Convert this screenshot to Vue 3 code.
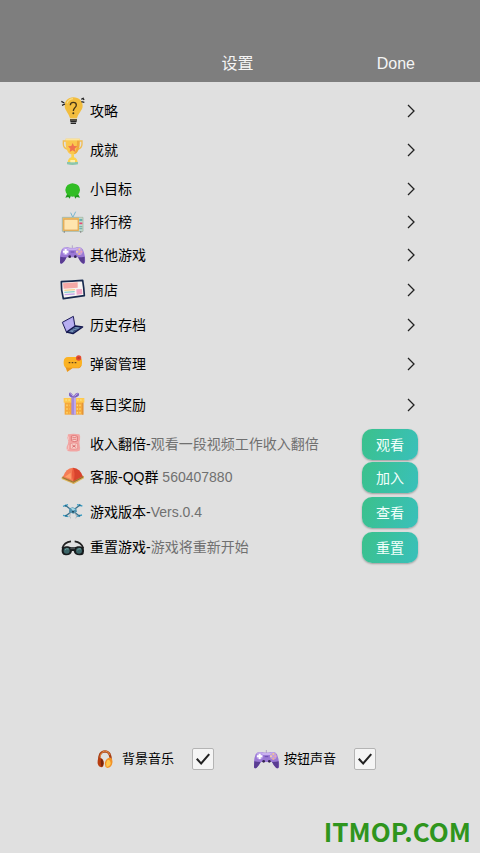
<script setup>
import { reactive } from 'vue'

const gamepad = `
  <path d="M67 232v-12" stroke="#9a86b8" stroke-width="2"/>
  <path d="M35 233q5-9 18-7q4 2 14 2t14-2q13-2 18 7q8 20 6 38q-2 7-9 2q-7-6-12-17H50q-5 11-12 17q-7 5-8-2q-2-20 5-38z" fill="#9a78d4"/>
  <path d="M31 254q8 2 19 2q-5 11-12 17q-7 5-8-2zM104 254q-8 2-20 2q5 11 12 17q7 5 8-2z" fill="#5a3d92"/>
  <path d="M37 232q5-7 15-5q4 2 15 2t15-2q10-2 15 5q-12-2-18 3H55q-6-5-18-3z" fill="#c9b0f0"/>
  <circle cx="47" cy="239" r="10" fill="#b79be8"/>
  <circle cx="88" cy="239" r="10" fill="#bf9fdc"/>
  <path d="M47 231v16M39 239h16" stroke="#fff" stroke-width="6"/>
  <circle cx="88" cy="232" r="3" fill="#f5c690"/><circle cx="94" cy="239" r="3" fill="#f0a0b8"/>
  <circle cx="81" cy="239" r="3" fill="#f7d3a0"/><circle cx="88" cy="246" r="3" fill="#f2b089"/>
  <circle cx="59" cy="254" r="4" fill="#33234f"/><circle cx="76" cy="254" r="4" fill="#33234f"/>
  <path d="M62 240h11" stroke="#6d4bb0" stroke-width="3"/>`

const art = {
  bulb: {
    box: '30 33 78 90',
    body: `
      <path d="M70 37c-16 0-26 11-26 25c0 14 12 21 16 38h21c4-17 17-24 17-38c0-14-11-25-28-25z" fill="#f2bd3e"/>
      <path d="M51 55q4-12 18-14" stroke="#fadd83" stroke-width="4" fill="none"/>
      <path d="M61 61q0-9 9-9t9 8q0 5-5 9q-4 4-4 9" stroke="#453516" stroke-width="4" fill="none"/>
      <circle cx="70" cy="85" r="3" fill="#453516"/>
      <path d="M60 101h21v5H60z" fill="#f3d078"/>
      <path d="M60 105h21M61 110h19M62 115h16" stroke="#252525" stroke-width="4"/>
      <path d="M34 49l9 5M36 61l9-4M94 43l7-4M94 50l9 2M99 39l3 6" stroke="#222" stroke-width="4"/>`
  },
  trophy: {
    box: '30 150 78 90',
    body: `
      <path d="M49 168H40v9q0 13 14 16M86 168h10v9q0 13-14 16" stroke="#f0bc52" stroke-width="4" fill="none"/>
      <path d="M47 161h42q2 46-21 48q-23-2-21-48z" fill="#fac74e"/>
      <path d="M47 161h42v5H47z" fill="#fce49c"/>
      <path d="M81 167q1 28-10 41q19-4 18-41z" fill="#efa83c"/>
      <path d="M68 174l4 9 10 1-8 7 2 10-8-5-9 5 2-10-7-7 10-1z" fill="#f0724f"/>
      <path d="M64 208h8v9q9 2 11 14H53q2-12 11-14z" fill="#fbd34e"/>
      <path d="M51 231h33v7q-17 4-33 0z" fill="#8cc6ad"/>
      <path d="M61 225h14v7H61z" fill="#fff0aa"/>`
  },
  badge: {
    box: '30 3 78 90',
    body: `
      <path d="M54 57l-8 17 9-2 4 5 6-14zM81 57l9 17-10-2-4 5-6-14z" fill="#209a1c"/>
      <path d="M61 32q6-3 13 0q11 2 14 11q4 8 0 16q-4 9-13 10q-7 4-14 0q-10-2-13-10q-4-8 0-16q3-9 13-11z" fill="#31bd24"/>`
  },
  tv: {
    box: '30 105 78 90',
    body: `
      <path d="M68 135l-6-13M69 135l8-16" stroke="#77b6cf" stroke-width="3"/>
      <path d="M37 136h62v42H37z" fill="#f2b95a" stroke="#8ab5b7" stroke-width="2"/>
      <path d="M42 142h42v32H42z" fill="#ffe5ae" stroke="#d69b4e" stroke-width="2"/>
      <path d="M87 137h11v40H87z" fill="#bbd8d0"/>
      <path d="M88 144h9" stroke="#459a9d" stroke-width="4"/>
      <path d="M88 154h9" stroke="#e84775" stroke-width="5"/>
      <path d="M88 164h9M88 170h9" stroke="#49928d" stroke-width="2"/>
      <path d="M41 180h4M90 180h4" stroke="#666" stroke-width="3"/>`
  },
  gamepad: { box: '30 204 78 90', body: gamepad },
  card: {
    box: '30 15 78 90',
    body: `
      <path d="M34 35q32-1 64-4q4 23 5 46q-32 4-63 9q-7-25-6-51z" fill="#f8f3f2" stroke="#17294e" stroke-width="5" stroke-linejoin="round"/>
      <path d="M39 40l44-3v16l-42 3z" fill="#f5a8a6"/>
      <path d="M43 61l32-2" stroke="#f6d48d" stroke-width="4"/>
      <path d="M43 67l31-2" stroke="#85cfcb" stroke-width="4"/>
      <path d="M44 74l30-2" stroke="#c6a7e9" stroke-width="4"/>
      <path d="M79 58l17-1 1 15-17 2z" fill="#f2a8c6"/>`
  },
  laptop: {
    box: '30 120 78 90',
    body: `
      <path d="M37 157l33-18 5 30-25 19z" fill="#aaa1e8" stroke="#20205a" stroke-width="3" stroke-linejoin="round"/>
      <path d="M41 159l26-14 4 22-20 14z" fill="#b8aff1"/>
      <path d="M50 186l26-18 22 3-29 20z" fill="#526b98" stroke="#14184f" stroke-width="4" stroke-linejoin="round"/>
      <path d="M60 184l17-12 11 1-19 13z" fill="#7e9cc0"/>
      <path d="M64 179l15 3M71 175l13 3M68 187l7-6" stroke="#25396a" stroke-width="2"/>`
  },
  bubble: {
    box: '30 12 78 90',
    body: `
      <path d="M54 36h30q12 0 12 14v5q0 14-14 14H67l-15 11q-3-1-1-11q-10-2-10-14v-5q1-14 13-14z" fill="#fbb223"/>
      <path d="M46 65q5 4 13 3h24q8-1 12-9q-2 11-14 11H67l-15 10z" fill="#eb951c"/>
      <path d="M56 53h5M65 53h5M74 53h5" stroke="#61421c" stroke-width="4"/>
      <circle cx="86" cy="39" r="8" fill="#e34b31"/>
      <path d="M84 37l4 4M88 37l-4 4" stroke="#8c281e" stroke-width="2"/>`
  },
  gift: {
    box: '30 138 78 90',
    body: `
      <path d="M44 174h56v38H44z" fill="#f6a83b"/>
      <path d="M41 162h62v14H41z" fill="#ffc94f"/>
      <path d="M49 184h9M80 184h14M49 195h9M80 195h14M49 206h9M80 206h14" stroke="#ffdf70" stroke-width="5" stroke-dasharray="4 4"/>
      <path d="M46 168h14M81 168h19" stroke="#fbe98e" stroke-width="3" stroke-dasharray="5 4"/>
      <path d="M64 161h14v51H64z" fill="#a78bd7"/>
      <path d="M72 161h6v51h-6z" fill="#c0a9e9"/>
      <path d="M97 176h3v36h-3z" fill="#d98d3a"/>
      <path d="M71 161q-16-1-14-12q3-10 14 7q10-15 16-7q3 9-16 12z" fill="#7d62bd"/>
      <path d="M61 149q4 0 8 8M83 149q-5 1-9 8" stroke="#c5b3ef" stroke-width="3" fill="none"/>`
  },
  ticket: {
    box: '30 15 78 90',
    body: `
      <path d="M54 31q16-4 34 0q4 4 2 16q-3 5-1 15q3 12 0 18q-15 5-36 1q-5-4-3-13q5-10 5-16q-5-12-1-21z" fill="#f2a5a3"/>
      <path d="M64 36q11-3 18 1v14q-9 4-18-1z" fill="#f9d2ce" stroke="#de7777" stroke-width="3"/>
      <path d="M67 41h12M67 46h12" stroke="#e57e7d" stroke-width="3"/>
      <path d="M61 59q11-5 22 0v15q-11 4-22 0z" fill="#f7cbc5" stroke="#e78583" stroke-width="2"/>
      <path d="M67 63l10 7M77 63l-10 7" stroke="#da6d70" stroke-width="3"/>
      <path d="M51 34q8 5 3 14M52 79q6-6 4-15" stroke="#fbd8d4" stroke-width="2" fill="none"/>`
  },
  tent: {
    box: '30 114 78 90',
    body: `
      <path d="M35 160l34-24 33 22-31 21z" fill="#b78436"/>
      <path d="M35 160l36 14 31-16v5l-31 17-36-15z" fill="#dfb75b"/>
      <path d="M69 131q-22 1-30 28l31 13z" fill="#f57c57"/>
      <path d="M69 131q22 2 29 26l-28 15z" fill="#d8432e"/>
      <path d="M69 131q-7 18 1 41q8-22-1-41z" fill="#eb5b3d"/>
      <path d="M45 158l17-12 1 19z" fill="#ffa16b"/>
      <path d="M37 161l33 14 30-16" stroke="#76542b" stroke-width="2" fill="none"/>`
  },
  drone: {
    box: '30 18 78 90',
    body: `
      <path d="M46 43l42 32M89 43L48 74" stroke="#3c718a" stroke-width="4"/>
      <path d="M39 46l15-5M81 41l16 4M39 73l16 4M80 76l16-4" stroke="#3f9fc5" stroke-width="4"/>
      <path d="M58 52l10-3 11 4 2 9-11 6-13-5z" fill="#5193b0"/>
      <path d="M62 52l7-1 8 4-8 4z" fill="#a7d8e6"/>
      <circle cx="69" cy="62" r="3" fill="#22465a"/>
      <path d="M61 65l-2 13 4 4M75 65l5 12-3 5" stroke="#999fa6" stroke-width="2" fill="none"/>
      <circle cx="47" cy="44" r="3" fill="#266c8d"/><circle cx="89" cy="43" r="3" fill="#266c8d"/>
      <circle cx="48" cy="74" r="3" fill="#266c8d"/><circle cx="88" cy="74" r="3" fill="#266c8d"/>`
  },
  goggles: {
    box: '30 123 78 90',
    body: `
      <path d="M37 172q5-19 26-21M74 151q20 2 26 21" stroke="#222" stroke-width="5" fill="none"/>
      <path d="M36 170q6-6 18-4l9 3h11l9-3q14-2 18 4q5 23-11 23q-16 1-19-13h-5q-3 14-19 13q-16-1-11-23z" fill="#171b1d"/>
      <circle cx="50" cy="179" r="9" fill="#3b6467"/><circle cx="87" cy="179" r="9" fill="#3b6467"/>
      <path d="M45 177q4-6 11-3M82 177q4-6 11-3" stroke="#75a4a2" stroke-width="3" fill="none"/>
      <path d="M61 173h14" stroke="#747a7c" stroke-width="2"/>`
  },
  headphones: {
    box: '20 10 78 90',
    body: `
      <path d="M42 62q-3-29 17-30q19 1 17 31" stroke="#a64016" stroke-width="7" fill="none"/>
      <path d="M44 50q2-17 15-19q10 0 15 12" stroke="#e68b45" stroke-width="3" fill="none"/>
      <path d="M39 53q12-5 16 10q2 13-5 17q-11 0-13-12q-1-9 2-15z" fill="#b83d0f"/>
      <path d="M47 54q8 3 7 16q-1 8-5 9q-4-9-2-25z" fill="#7a260c"/>
      <path d="M77 51q-15-1-18 14q-2 14 7 17q13-2 15-15q2-10-4-16z" fill="#f29227"/>
      <path d="M67 57q-7 8-3 22q11-1 12-11q0-10-9-11z" fill="#ffc84e"/>`
  },
  gamepadSmall: { box: '30 202 78 90', body: gamepad }
}

const links = [
  { name: '攻略', icon: 'bulb', gap: 'none' },
  { name: '成就', icon: 'trophy', gap: 'medium' },
  { name: '小目标', icon: 'badge', gap: 'medium' },
  { name: '排行榜', icon: 'tv', gap: 'tight' },
  { name: '其他游戏', icon: 'gamepad', gap: 'tight' },
  { name: '商店', icon: 'card', gap: 'small' },
  { name: '历史存档', icon: 'laptop', gap: 'small' },
  { name: '弹窗管理', icon: 'bubble', gap: 'medium' },
  { name: '每日奖励', icon: 'gift', gap: 'large' }
]

const actions = [
  { name: '收入翻倍-', note: '观看一段视频工作收入翻倍', button: '观看', icon: 'ticket', gap: 'medium' },
  { name: '客服-QQ群 ', note: '560407880', button: '加入', icon: 'tent', gap: 'tight' },
  { name: '游戏版本-', note: 'Vers.0.4', button: '查看', icon: 'drone', gap: 'small' },
  { name: '重置游戏-', note: '游戏将重新开始', button: '重置', icon: 'goggles', gap: 'small' }
]

const sound = reactive({
  music: true,
  buttons: true
})
</script>

<template>
  <div class="page">
    <header class="header">
      <h1>设置</h1>
      <button type="button" class="done">Done</button>
    </header>

    <main class="list">
      <button v-for="item in links" :key="item.name" type="button" class="row link" :class="item.gap">
        <svg class="icon" :viewBox="art[item.icon].box" fill="none" aria-hidden="true" v-html="art[item.icon].body"></svg>
        <span class="name">{{ item.name }}</span>
        <svg class="chevron" viewBox="0 0 8 14" aria-hidden="true">
          <path d="M1 1l6 6-6 6" fill="none" stroke="#222" stroke-width="1.300" />
        </svg>
      </button>

      <div v-for="item in actions" :key="item.name" class="row" :class="item.gap">
        <svg class="icon" :viewBox="art[item.icon].box" fill="none" aria-hidden="true" v-html="art[item.icon].body"></svg>
        <span class="name">{{ item.name }}<span class="note">{{ item.note }}</span></span>
        <button type="button" class="action">{{ item.button }}</button>
      </div>
    </main>

    <div class="sounds">
      <div class="sound">
        <svg class="icon" :viewBox="art.headphones.box" fill="none" aria-hidden="true" v-html="art.headphones.body"></svg>
        <label for="music">背景音乐</label>
        <input id="music" v-model="sound.music" type="checkbox">
      </div>
      <div class="sound">
        <svg class="icon" :viewBox="art.gamepadSmall.box" fill="none" aria-hidden="true" v-html="art.gamepadSmall.body"></svg>
        <label for="buttons">按钮声音</label>
        <input id="buttons" v-model="sound.buttons" type="checkbox">
      </div>
    </div>

    <footer class="site">ITMOP.COM</footer>
  </div>
</template>

<style>
body {
  margin: 0;
  background: #e0e0e0;
}
</style>

<style scoped>
.page {
  display: flex;
  flex-direction: column;
  min-height: 100vh;
  background: #e0e0e0;
  color: #000;
  font-family: "Liberation Sans", "Noto Sans CJK SC", sans-serif;
  font-size: 14px;
}

button {
  margin: 0;
  padding: 0;
  border: 0;
  background: none;
  color: inherit;
  font: inherit;
  cursor: pointer;
}

.header {
  display: grid;
  grid-template-columns: 1fr auto 1fr;
  align-items: center;
  padding: 52px 65px 6px 60px;
  background: #7e7e7e;
  color: #f5f5f5;
}

h1 {
  grid-column: 2;
  margin: 0;
  font-size: 16px;
  font-weight: 400;
  line-height: 24px;
}

.done {
  justify-self: end;
  font-size: 16px;
  line-height: 24px;
}

.list {
  display: flex;
  flex-direction: column;
  padding: 13px 62px 0 60px;
}

.row {
  display: flex;
  align-items: center;
  gap: 4px;
  height: 32px;
}

.tight {
  margin-top: 1px;
}

.small {
  margin-top: 3px;
}

.medium {
  margin-top: 7px;
}

.large {
  margin-top: 9px;
}

.link {
  padding-right: 3px;
  text-align: left;
}

.icon {
  flex: none;
  width: 26px;
  height: 30px;
}

.name {
  flex: 1;
  line-height: 20px;
  white-space: pre-wrap;
}

.note {
  color: #707070;
}

.chevron {
  width: 8px;
  height: 14px;
}

.action {
  width: 56px;
  height: 31px;
  border-radius: 10px;
  background: linear-gradient(110deg, #3bc18b, #39c0bb);
  box-shadow: 0 1px 2px rgba(0, 0, 0, 0.3);
  color: #f2fffb;
}

.sounds {
  display: flex;
  justify-content: center;
  gap: 40px;
  margin-top: auto;
  padding: 20px 12px 39px 0;
}

.sound {
  display: flex;
  align-items: center;
  gap: 4px;
  font-size: 13px;
}

.sound label {
  margin-right: 14px;
  line-height: 20px;
}

.sound input {
  display: grid;
  place-items: center;
  width: 22px;
  height: 22px;
  margin: 0;
  border: 1px solid #b4b4b4;
  border-radius: 2px;
  background: #f5f5f5;
  appearance: none;
}

.sound input:checked::before {
  content: "";
  width: 14px;
  height: 12px;
  background: #222;
  clip-path: polygon(0 54%, 11% 42%, 36% 76%, 89% 4%, 100% 14%, 37% 100%);
}

.site {
  padding: 0 9px 5px;
  color: #2f951d;
  font-family: "Noto Sans CJK SC", sans-serif;
  font-size: 26px;
  font-weight: 700;
  line-height: 35px;
  text-align: right;
}
</style>
